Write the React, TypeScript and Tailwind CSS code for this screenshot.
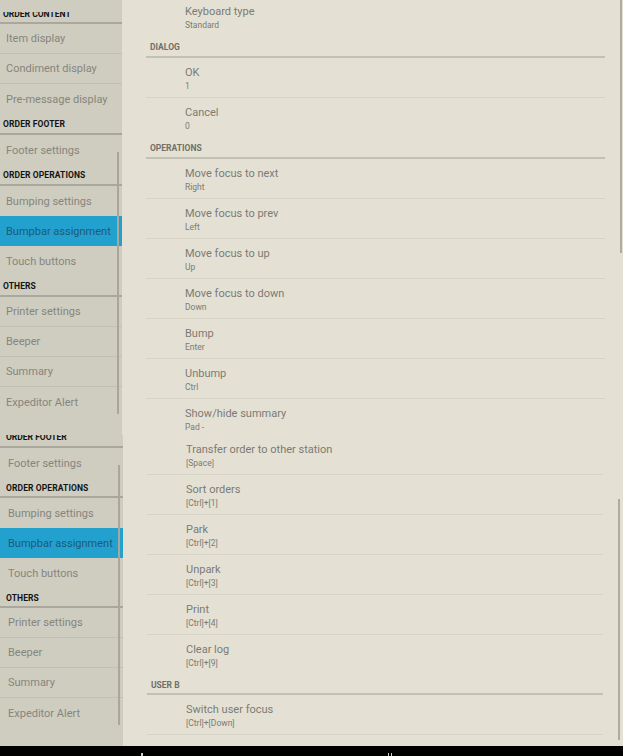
import React from "react";

const FONT = { fontFamily: "Roboto, 'Noto Sans', Arial, sans-serif" };

function SideHeader({ label, cls }: { label: string; cls: string }) {
  return (
    <div
      className={
        "flex items-center border-b-2 border-[#aaa89c] pt-[2px] text-[8.5px] font-bold leading-none tracking-[0.1px] text-[#141414] " +
        cls
      }
    >
      {label}
    </div>
  );
}

function SideItem({
  label,
  selected,
  divider,
  cls,
}: {
  label: string;
  selected?: boolean;
  divider?: boolean;
  cls: string;
}) {
  return (
    <div
      className={
        "flex h-[30px] shrink-0 items-center pt-[2px] text-[11px] " +
        cls +
        (selected ? " bg-[#22a1cf] text-[#1d5a78]" : " text-[#86857d]") +
        (divider ? " border-b border-[#c2c0b4]" : "")
      }
    >
      {label}
    </div>
  );
}

function MainHeader({ label, cls }: { label: string; cls: string }) {
  return (
    <div
      className={
        "flex shrink-0 items-center border-b-2 border-[#c3c0b4] pl-[4px] pt-[2px] text-[8.5px] font-bold leading-none text-[#706f68] " +
        cls
      }
    >
      {label}
    </div>
  );
}

function MainRow({
  title,
  sub,
  divider,
}: {
  title: string;
  sub: string;
  divider?: boolean;
}) {
  return (
    <div
      className={
        "flex h-[40px] shrink-0 flex-col pl-[39px] pt-[8px]" +
        (divider ? " border-b border-[#d6d3c6]" : "")
      }
    >
      <div className="text-[11px] leading-[14px] text-[#7b7b74]">{title}</div>
      <div className="text-[8.5px] leading-[12px] text-[#7b7b74]">{sub}</div>
    </div>
  );
}

export default function App() {
  return (
    <div className="flex h-[756px] w-[623px] flex-col overflow-hidden bg-black" style={FONT}>
      {/* top segment */}
      <div className="relative flex h-[435px] shrink-0 overflow-hidden">
        <div className="flex w-[122px] shrink-0 flex-col bg-[#cfcdc0]">
          <div className="h-[12px] shrink-0" />
          <div className="h-[12px] shrink-0 overflow-hidden border-b-2 border-[#aaa89c] pl-[3px]">
            <div className="-mt-[3px] text-[8.5px] font-bold leading-[10px] text-[#141414]">
              ORDER CONTENT
            </div>
          </div>
          <SideItem label="Item display" divider cls="pl-[6px]" />
          <SideItem label="Condiment display" divider cls="pl-[6px]" />
          <SideItem label="Pre-message display" cls="pl-[6px]" />
          <SideHeader label="ORDER FOOTER" cls="h-[21px] pl-[3px]" />
          <SideItem label="Footer settings" cls="pl-[6px]" />
          <SideHeader label="ORDER OPERATIONS" cls="h-[21px] pl-[3px]" />
          <SideItem label="Bumping settings" cls="pl-[6px]" />
          <SideItem label="Bumpbar assignment" selected cls="pl-[6px]" />
          <SideItem label="Touch buttons" cls="pl-[6px]" />
          <SideHeader label="OTHERS" cls="h-[21px] pl-[3px]" />
          <SideItem label="Printer settings" divider cls="pl-[6px]" />
          <SideItem label="Beeper" divider cls="pl-[6px]" />
          <SideItem label="Summary" divider cls="pl-[6px]" />
          <SideItem label="Expeditor Alert" cls="pl-[6px]" />
        </div>
        <div className="flex flex-1 flex-col bg-[#e4e1d4] pl-[24px] pr-[18px]">
          <div className="-mt-[3px]" />
          <MainRow title="Keyboard type" sub="Standard" />
          <MainHeader label="DIALOG" cls="h-[21px]" />
          <MainRow title="OK" sub="1" divider />
          <MainRow title="Cancel" sub="0" />
          <MainHeader label="OPERATIONS" cls="h-[21px]" />
          <MainRow title="Move focus to next" sub="Right" divider />
          <MainRow title="Move focus to prev" sub="Left" divider />
          <MainRow title="Move focus to up" sub="Up" divider />
          <MainRow title="Move focus to down" sub="Down" divider />
          <MainRow title="Bump" sub="Enter" divider />
          <MainRow title="Unbump" sub="Ctrl" divider />
          <MainRow title="Show/hide summary" sub="Pad -" />
        </div>
        <div className="absolute left-[117px] top-[152px] h-[262px] w-[2px] bg-[#a9a79c]" />
        <div className="absolute left-[620px] top-0 h-[253px] w-[2px] bg-[#aeab9f]" />
      </div>

      {/* bottom segment */}
      <div className="relative flex h-[311px] shrink-0 overflow-hidden">
        <div className="flex w-[123px] shrink-0 flex-col bg-[#cfcdc0]">
          <div className="h-[13px] shrink-0 overflow-hidden border-b-2 border-[#aaa89c] pl-[6px]">
            <div className="-mt-[3px] text-[8.5px] font-bold leading-[10px] text-[#141414]">
              ORDER FOOTER
            </div>
          </div>
          <SideItem label="Footer settings" cls="pl-[8px]" />
          <SideHeader label="ORDER OPERATIONS" cls="h-[20px] shrink-0 pl-[6px]" />
          <SideItem label="Bumping settings" cls="pl-[8px]" />
          <SideItem label="Bumpbar assignment" selected cls="pl-[8px]" />
          <SideItem label="Touch buttons" cls="pl-[8px]" />
          <SideHeader label="OTHERS" cls="h-[20px] shrink-0 pl-[6px]" />
          <SideItem label="Printer settings" divider cls="pl-[8px]" />
          <SideItem label="Beeper" divider cls="pl-[8px]" />
          <SideItem label="Summary" divider cls="pl-[8px]" />
          <SideItem label="Expeditor Alert" cls="pl-[8px]" />
        </div>
        <div className="flex flex-1 flex-col bg-[#e4e1d4] pl-[24px] pr-[20px]">
          <MainRow title="Transfer order to other station" sub="[Space]" divider />
          <MainRow title="Sort orders" sub="[Ctrl]+[1]" divider />
          <MainRow title="Park" sub="[Ctrl]+[2]" divider />
          <MainRow title="Unpark" sub="[Ctrl]+[3]" divider />
          <MainRow title="Print" sub="[Ctrl]+[4]" divider />
          <MainRow title="Clear log" sub="[Ctrl]+[9]" />
          <MainHeader label="USER B" cls="h-[20px]" />
          <MainRow title="Switch user focus" sub="[Ctrl]+[Down]" divider />
        </div>
        <div className="absolute left-[118px] top-[30px] h-[260px] w-[2px] bg-[#a9a79c]" />
        <div className="absolute left-[618px] top-[64px] h-[241px] w-[2px] bg-[#aeab9f]" />
      </div>

      {/* nav bar */}
      <div className="flex h-[10px] shrink-0 bg-black pl-[141px] pt-[7px]">
        <div className="h-[3px] w-[2px] bg-[#cfcfcf]" />
        <div className="ml-[245px] h-[3px] w-[1px] bg-[#cfcfcf]" />
        <div className="ml-[2px] h-[3px] w-[1px] bg-[#cfcfcf]" />
      </div>
    </div>
  );
}
